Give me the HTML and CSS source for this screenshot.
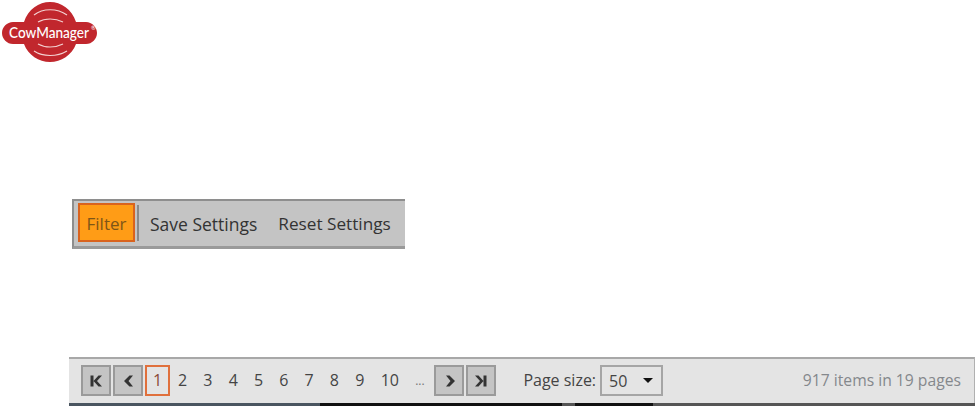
FILE: index.html
```html
<!DOCTYPE html>
<html lang="en">
<head>
<meta charset="utf-8">
<title>CowManager</title>
<link rel="stylesheet" href="styles.css">
</head>
<body>
<header class="logo">
  <svg width="98" height="62" viewBox="0 0 98 62">
    <path class="logo-red" d="M50 2c11 0 22 7 26 20h10c6 0 11 5 11 11s-5 11-11 11H76c-4 11-15 18-26 18s-22-7-26-18H13C7 44 2 39 2 33s5-11 11-11h11C28 9 39 2 50 2z"/>
    <path class="logo-arc" d="M34 15c9-7 23-7 33 0"/>
    <path class="logo-arc" d="M38 22c7-4 17-4 25 0"/>
    <path class="logo-arc" d="M38 44c7 4 17 4 25 0"/>
    <path class="logo-arc" d="M34 51c9 6 23 6 33 0"/>
    <text class="logo-text" x="9" y="38" textLength="80" lengthAdjust="spacingAndGlyphs">CowManager</text>
    <text class="logo-reg" x="91" y="30">®</text>
  </svg>
</header>
<div class="toolbar">
  <button class="tool tool-active">Filter</button>
  <span class="tool-sep"></span>
  <button class="tool tool-save">Save Settings</button>
  <button class="tool tool-reset">Reset Settings</button>
</div>
<nav class="pager">
  <button class="nav-btn"><svg width="16" height="16" viewBox="0 0 16 16"><path d="M2.500 2.500h3v11h-3zM5.500 8l5-5.500H14L9 8l5 5.500h-3.500z"/></svg></button>
  <button class="nav-btn"><svg width="16" height="16" viewBox="0 0 16 16"><path d="M9.500 2.500H13L8.500 8l4.500 5.500H9.500L4 8z"/></svg></button>
  <span class="num num-current">1</span>
  <span class="num">2</span>
  <span class="num">3</span>
  <span class="num">4</span>
  <span class="num">5</span>
  <span class="num">6</span>
  <span class="num">7</span>
  <span class="num">8</span>
  <span class="num">9</span>
  <span class="num num-wide">10</span>
  <span class="num num-more">...</span>
  <button class="nav-btn"><svg width="16" height="16" viewBox="0 0 16 16"><path d="M8.500 2.500H5L9.500 8 5 13.500h3.500L14 8z"/></svg></button>
  <button class="nav-btn"><svg width="16" height="16" viewBox="0 0 16 16"><path d="M10.500 2.500h3v11h-3zM10.500 8l-5-5.500H2L7 8l-5 5.500h3.500z"/></svg></button>
  <span class="size-label">Page size:</span>
  <span class="size-select"><span>50</span><i class="caret"></i></span>
  <span class="summary">917 items in 19 pages</span>
</nav>
<div class="pager-edge"></div>
</body>
</html>
```
FILE: styles.css
```css
html, body { margin: 0; padding: 0; background: #fff; }
body {
  height: 406px;
  overflow: hidden;
  font-family: "Open Sans", "Noto Sans", sans-serif;
  font-size: 16px;
  color: #3a3a3a;
}
button { font: inherit; color: inherit; padding: 0; margin: 0; }

.logo { height: 62px; }
.logo svg { display: block; }
.logo-red { fill: #c1272d; }
.logo-arc { fill: none; stroke: #f3d0d0; stroke-width: 1.200; }
.logo-text { fill: #fff; font-family: Lato, sans-serif; font-size: 15px; font-weight: 500; }
.logo-reg { fill: #fff; font-family: Lato, sans-serif; font-size: 6px; }

.toolbar {
  width: 333px;
  height: 50px;
  box-sizing: border-box;
  margin: 137px 0 0 72px;
  padding: 2px 0 0 4px;
  display: flex;
  align-items: flex-start;
  background: #c4c4c4;
  border-top: 2px solid #8e8e8e;
  border-left: 2px solid #8e8e8e;
  border-bottom: 3px solid #9a9a9a;
}
.tool {
  box-sizing: border-box;
  height: 39px;
  padding-top: 3px;
  background: none;
  border: 0;
  font-size: 17.500px;
  color: #333;
  line-height: 34px;
  white-space: nowrap;
}
.tool-active {
  width: 57px;
  background: #ff9c16;
  border: 2px solid #d9631e;
  color: #7d5518;
  font-size: 17px;
  line-height: 32px;
}
.tool-sep { width: 2px; height: 36px; background: #8a8a8a; margin: 2px 0 0 2px; }
.tool-save { margin-left: 11px; }
.tool-reset { margin-left: 21px; font-size: 17.200px; }

.pager {
  width: 906px;
  height: 46px;
  box-sizing: border-box;
  margin: 108px 0 0 69px;
  padding: 6px 0 0 12px;
  display: flex;
  align-items: flex-start;
  background: #e4e4e4;
  border-top: 2px solid #a8a8a8;
  border-right: 1px solid #b0b0b0;
}
.pager-edge {
  width: 906px;
  height: 3px;
  margin-left: 69px;
  background: linear-gradient(90deg, #4a5560 0, #4a5560 251px, #111 251px, #111 493px, #555 493px, #555 506px, #111 506px, #111 584px, #555 584px, #555 100%);
}
.nav-btn {
  width: 30px;
  height: 31px;
  box-sizing: border-box;
  margin-right: 2px;
  display: flex;
  align-items: center;
  justify-content: center;
  background: #c4c4c4;
  border: 2px solid #9a9a9a;
}
.nav-btn svg { fill: #333; }
.num {
  width: 25.300px;
  height: 31px;
  line-height: 31px;
  text-align: center;
  color: #444;
}
.num-current {
  width: 25px;
  box-sizing: border-box;
  line-height: 27px;
  border: 2px solid #e0703c;
  color: #8a4a3a;
}
.num-wide { width: 35px; }
.num-more { width: 25px; margin-right: 2px; color: #777; font-size: 12px; }
.size-label { margin-left: 25px; line-height: 31px; color: #444; }
.size-select {
  width: 63px;
  height: 31px;
  box-sizing: border-box;
  margin-left: 4px;
  padding: 0 7px;
  display: flex;
  align-items: center;
  justify-content: space-between;
  border: 2px solid #a5a5a5;
  color: #444;
}
.caret {
  width: 0;
  height: 0;
  margin-right: 1px;
  border-left: 5px solid transparent;
  border-right: 5px solid transparent;
  border-top: 5px solid #111;
}
.summary { margin-left: auto; margin-right: 13px; line-height: 31px; color: #85888c; font-size: 15.700px; }
```
